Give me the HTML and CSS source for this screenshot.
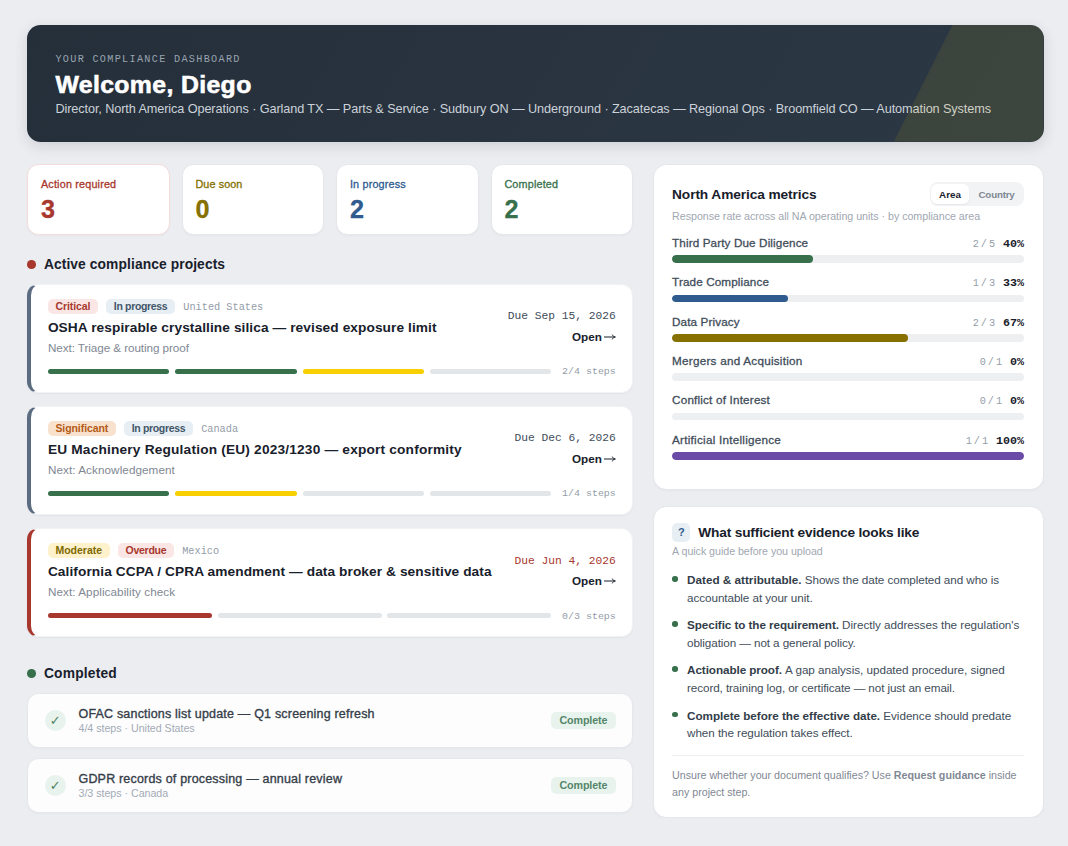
FILE: index.html
```html
<!DOCTYPE html>
<html lang="en">
<head>
<meta charset="utf-8">
<title>Compliance Dashboard</title>
<link rel="stylesheet" href="styles.css">
</head>
<body>
<div class="page">
  <header class="hero">
    <div class="eyebrow">YOUR COMPLIANCE DASHBOARD</div>
    <h1>Welcome, Diego</h1>
    <p>Director, North America Operations · Garland TX — Parts &amp; Service · Sudbury ON — Underground · Zacatecas — Regional Ops · Broomfield CO — Automation Systems</p>
  </header>
  <div class="columns">
    <main class="main">
      <div class="stats">
        <div class="stat alert red"><div class="label">Action required</div><div class="num">3</div></div>
        <div class="stat olive"><div class="label t-09">Due soon</div><div class="num">0</div></div>
        <div class="stat blue"><div class="label">In progress</div><div class="num">2</div></div>
        <div class="stat green"><div class="label">Completed</div><div class="num">2</div></div>
      </div>
      <h2 class="section"><span class="dot bg-red"></span>Active compliance projects</h2>
      <div class="projects">
        <article class="project">
          <div class="top">
            <div class="info">
              <div class="tags"><span class="tag critical">Critical</span><span class="tag progress">In progress</span><span class="country">United States</span></div>
              <h3>OSHA respirable crystalline silica — revised exposure limit</h3>
              <div class="next tight">Next: Triage &amp; routing proof</div>
            </div>
            <div class="side"><div class="due">Due Sep 15, 2026</div><div class="open">Open<svg viewBox="0 0 12 8" class="arrow"><path d="M0 4H11M8.2 1.6C8.8 2.9 9.7 3.7 11.4 4C9.7 4.3 8.8 5.1 8.2 6.4"/></svg></div></div>
          </div>
          <div class="steps"><div class="bars"><i class="bg-green"></i><i class="bg-green"></i><i class="bg-yellow"></i><i></i></div><span>2/4 steps</span></div>
        </article>
        <article class="project">
          <div class="top">
            <div class="info">
              <div class="tags"><span class="tag significant">Significant</span><span class="tag progress">In progress</span><span class="country">Canada</span></div>
              <h3 class="wide">EU Machinery Regulation (EU) 2023/1230 — export conformity</h3>
              <div class="next">Next: Acknowledgement</div>
            </div>
            <div class="side"><div class="due">Due Dec 6, 2026</div><div class="open">Open<svg viewBox="0 0 12 8" class="arrow"><path d="M0 4H11M8.2 1.6C8.8 2.9 9.7 3.7 11.4 4C9.7 4.3 8.8 5.1 8.2 6.4"/></svg></div></div>
          </div>
          <div class="steps"><div class="bars"><i class="bg-green"></i><i class="bg-yellow"></i><i></i><i></i></div><span>1/4 steps</span></div>
        </article>
        <article class="project late">
          <div class="top">
            <div class="info">
              <div class="tags"><span class="tag moderate">Moderate</span><span class="tag overdue">Overdue</span><span class="country">Mexico</span></div>
              <h3>California CCPA / CPRA amendment — data broker &amp; sensitive data</h3>
              <div class="next">Next: Applicability check</div>
            </div>
            <div class="side"><div class="due red">Due Jun 4, 2026</div><div class="open">Open<svg viewBox="0 0 12 8" class="arrow"><path d="M0 4H11M8.2 1.6C8.8 2.9 9.7 3.7 11.4 4C9.7 4.3 8.8 5.1 8.2 6.4"/></svg></div></div>
          </div>
          <div class="steps"><div class="bars"><i class="bg-red"></i><i></i><i></i></div><span>0/3 steps</span></div>
        </article>
      </div>
      <h2 class="section done-title"><span class="dot bg-green"></span>Completed</h2>
      <div class="done-list">
        <div class="done"><span class="check">✓</span><div class="done-text"><b>OFAC sanctions list update — Q1 screening refresh</b><small>4/4 steps · United States</small></div><span class="complete">Complete</span></div>
        <div class="done"><span class="check">✓</span><div class="done-text"><b>GDPR records of processing — annual review</b><small>3/3 steps · Canada</small></div><span class="complete">Complete</span></div>
      </div>
    </main>
    <aside class="aside">
      <section class="card metrics">
        <div class="metrics-head"><h2>North America metrics</h2><div class="toggle"><span class="on">Area</span><span>Country</span></div></div>
        <p class="sub resp">Response rate across all NA operating units · by compliance area</p>
        <div class="metric"><div class="row"><span class="name">Third Party Due Diligence</span><span class="frac">2<i>/</i>5</span><b>40%</b></div><div class="track"><div class="bg-green" style="width:40%"></div></div></div>
        <div class="metric"><div class="row"><span class="name">Trade Compliance</span><span class="frac">1<i>/</i>3</span><b>33%</b></div><div class="track"><div class="bg-blue" style="width:33%"></div></div></div>
        <div class="metric"><div class="row"><span class="name">Data Privacy</span><span class="frac">2<i>/</i>3</span><b>67%</b></div><div class="track"><div class="bg-olive" style="width:67%"></div></div></div>
        <div class="metric"><div class="row"><span class="name t-25">Mergers and Acquisition</span><span class="frac">0<i>/</i>1</span><b>0%</b></div><div class="track"></div></div>
        <div class="metric"><div class="row"><span class="name t-19">Conflict of Interest</span><span class="frac">0<i>/</i>1</span><b>0%</b></div><div class="track"></div></div>
        <div class="metric"><div class="row"><span class="name t-25">Artificial Intelligence</span><span class="frac">1<i>/</i>1</span><b>100%</b></div><div class="track"><div class="bg-purple" style="width:100%"></div></div></div>
      </section>
      <section class="card guide">
        <div class="guide-head"><span class="q">?</span><h2>What sufficient evidence looks like</h2></div>
        <p class="sub">A quick guide before you upload</p>
        <ul>
          <li><b class="b1">Dated &amp; attributable.</b> Shows the date completed and who is<br>accountable at your unit.</li>
          <li><b>Specific to the requirement.</b> <span class="even">Directly addresses the regulation's</span><br><span class="snug">obligation — not a general policy.</span></li>
          <li><b>Actionable proof.</b> <span class="even">A gap analysis, updated procedure, signed</span><br><span class="snug">record, training log, or certificate — not just an email.</span></li>
          <li><b class="b4">Complete before the effective date.</b> <span class="even">Evidence should predate</span><br>when the regulation takes effect.</li>
        </ul>
        <p class="foot">Unsure whether your document qualifies? Use <b>Request guidance</b> inside<br>any project step.</p>
      </section>
    </aside>
  </div>
</div>
</body>
</html>
```
FILE: styles.css
```css
* { box-sizing: border-box; margin: 0; padding: 0; }
body {
  background: #ecedf1;
  color: #18202b;
  font-family: "Liberation Sans", Arial, sans-serif;
  white-space: nowrap;
}
.page { padding: 24.5px 24.5px 0 27.4px; }

.red { color: #a8382e; }
.olive { color: #857000; }
.blue { color: #2f5b8f; }
.green { color: #38704c; }
.bg-red { background: #a8382e !important; }
.bg-green { background: #38704c !important; }
.bg-yellow { background: #f8cf00 !important; }
.bg-blue { background: #2f5b8f; }
.bg-olive { background: #857000; }
.bg-purple { background: #6b4aa8; }

/* Hero banner */
.hero {
  position: relative;
  height: 117px;
  padding: 28px 28px 0;
  border-radius: 13.5px;
  background: linear-gradient(120deg, #252f3a, #2c3845);
  box-shadow: 0 4px 14px rgba(30, 41, 59, .14);
}
.hero::after {
  content: "";
  position: absolute;
  top: 0; right: 0; bottom: 0;
  width: 149.5px;
  border-radius: 0 13.5px 13.5px 0;
  background: rgba(248, 207, 0, .085);
  clip-path: polygon(39.3% 0, 100% 0, 100% 100%, 0 100%);
}
.eyebrow {
  font: 10.2px/14px "Liberation Mono", monospace;
  letter-spacing: 1.3px;
  color: #98a4b0;
}
.hero h1 {
  margin-top: 4px;
  font-size: 24.8px;
  line-height: 28px;
  letter-spacing: .37px;
  color: #fff;
  -webkit-text-stroke: .6px #fff;
}
.hero p {
  margin-top: 1.4px;
  font-size: 12.7px;
  line-height: 18px;
  letter-spacing: -.099px;
  color: #ccd2d9;
}

.columns { display: flex; gap: 19.6px; margin-top: 22.9px; }
.main { width: 605.7px; }
.aside { flex: 1; }

/* Stat tiles */
.stats { display: grid; grid-template-columns: repeat(4, 1fr); gap: 12.2px; }
.stat, .card, .done { background: #fff; border: 1px solid #e5e7eb; box-shadow: 0 1px 2px rgba(30, 41, 59, .03); }
.stat { height: 71.1px; padding: 12px 12.6px; border-radius: 11.5px; }
.stat.alert { border-color: #f3dcd9; }
.label { font-size: 10.8px; line-height: 14px; letter-spacing: .18px; -webkit-text-stroke: .3px; }
.t-09 { letter-spacing: .096px; }
.num { margin-top: 5px; font-size: 25.2px; line-height: 26px; font-weight: 700; -webkit-text-stroke: .3px; }

.section {
  display: flex;
  align-items: center;
  gap: 7.8px;
  margin: 20.6px 0 9.6px;
  font-size: 13.8px;
  line-height: 18px;
  letter-spacing: .1px;
}
.dot { width: 8.7px; height: 8.7px; margin-top: -1.4px; border-radius: 50%; }
.done-title { margin: 27.8px 0 9.4px; letter-spacing: .2px; }

/* Active projects */
.projects { display: grid; gap: 12.8px; }
.project {
  height: 109.4px;
  padding: 14px 16.3px 0 16.5px;
  background: #fff;
  border: 1px solid #f1f2f4;
  border-left: 4px solid #5b6b80;
  border-radius: 11.5px;
  box-shadow: 0 1px 2px rgba(30, 41, 59, .05);
}
.project.late { border-left-color: #a8382e; }
.top { display: flex; justify-content: space-between; }
.tags { display: flex; gap: 8.4px; height: 15px; }
.tag {
  padding: 0 7.5px;
  border-radius: 5px;
  font-size: 10.5px;
  line-height: 15px;
  font-weight: 700;
  letter-spacing: -.07px;
}
.critical { background: #fae6e4; color: #a8382e; }
.overdue { background: #fae6e4; color: #a8382e; letter-spacing: -.25px; }
.progress { background: #e8eff4; color: #43566a; letter-spacing: -.33px; }
.significant { background: #f9e2cd; color: #b35a16; }
.moderate { background: #fdf2cc; color: #7d6900; letter-spacing: 0; }
.country { font: 10.25px/16.6px "Liberation Mono", monospace; color: #939ca8; }
.project h3 { margin-top: 5.2px; font-size: 13.7px; line-height: 18px; letter-spacing: .086px; }
.project .wide { letter-spacing: .187px; }
.next { margin-top: 3.9px; font-size: 11.7px; line-height: 14px; letter-spacing: .078px; color: #7f8893; }
.next.tight { letter-spacing: -.069px; }
.side { padding-top: 10.6px; text-align: right; }
.due { font: 11.25px/14px "Liberation Mono", monospace; color: #414d5a; }
.due.red { color: #a8382e; }
.open { margin-top: 6.6px; font-size: 11.7px; line-height: 14px; font-weight: 700; }
.arrow { width: 12px; height: 8px; margin-left: 2px; fill: none; stroke: #18202b; stroke-width: 1; }
.steps { display: flex; align-items: center; gap: 10.8px; margin-top: 9.7px; height: 14px; }
.bars { flex: 1; display: flex; gap: 5.8px; }
.bars i { flex: 1; height: 5px; border-radius: 2.5px; background: #e3e6e9; }
.steps span { padding-top: 1.4px; font: 9.95px/14px "Liberation Mono", monospace; color: #939ca8; }

/* Completed projects */
.done-list { display: grid; gap: 10px; }
.done {
  display: flex;
  align-items: center;
  height: 55.2px;
  padding: 0 16.4px;
  border-radius: 11.5px;
  background: #fdfdfe;
}
.check {
  width: 21px;
  height: 21px;
  border-radius: 50%;
  background: #e9f3ed;
  color: #4c8260;
  font: 700 13px/21px "DejaVu Sans", sans-serif;
  text-align: center;
}
.done-text { flex: 1; display: grid; margin-left: 12.7px; }
.done-text b {
  padding-top: 1px;
  font-size: 12.5px;
  line-height: 14px;
  font-weight: 400;
  letter-spacing: .19px;
  color: #363e49;
  -webkit-text-stroke: .35px;
}
.done-text small { font-size: 10.7px; line-height: 14px; letter-spacing: -.033px; color: #a3abb5; }
.complete {
  padding: 0 8.3px;
  border-radius: 5px;
  background: #e9f3ed;
  color: #53866a;
  font-size: 10.7px;
  line-height: 17px;
  font-weight: 700;
  letter-spacing: -.088px;
}

/* Right column cards */
.card { padding: 16.6px 18.4px 0; border-radius: 13.5px; }
.metrics { height: 325.5px; }
.metrics-head { display: flex; justify-content: space-between; align-items: center; }
.card h2 { font-size: 13.7px; line-height: 18px; letter-spacing: -.086px; }
.metrics-head h2 { padding-top: 1.4px; }
.toggle { display: flex; height: 24px; padding: 1.7px; border-radius: 8px; background: #f1f3f5; }
.toggle span {
  padding: 0 7.8px;
  border-radius: 6px;
  font-size: 9.8px;
  line-height: 21.4px;
  font-weight: 700;
  letter-spacing: -.2px;
  color: #7f8893;
}
.toggle span:last-child { margin-left: 2px; }
.toggle .on { background: #fff; color: #18202b; letter-spacing: 0; box-shadow: 0 1px 2px rgba(30, 41, 59, .06); }
.sub { font-size: 10.7px; line-height: 14px; letter-spacing: -.046px; color: #9fa7b1; }
.resp { margin: 2.7px 0 12.2px; letter-spacing: -.033px; }
.metric { height: 39.35px; }
.row { display: flex; height: 16px; line-height: 15px; }
.name { flex: 1; font-size: 11.7px; letter-spacing: .12px; color: #414d5a; -webkit-text-stroke: .3px; }
.t-25 { letter-spacing: .25px; }
.t-19 { letter-spacing: .19px; }
.frac { font: 10.2px/19px "Liberation Mono", monospace; color: #939ca8; }
.frac i { margin: 0 2px; font-style: normal; }
.row b { margin-left: 8px; font: 700 11.7px/18.4px "Liberation Mono", monospace; }
.track { height: 7.6px; margin-top: 4.4px; border-radius: 4px; background: #eeeff1; overflow: hidden; }
.track div { height: 100%; border-radius: 4px; }

.guide { height: 311.8px; margin-top: 16px; }
.guide-head { display: flex; align-items: center; gap: 7.8px; height: 18.4px; }
.guide-head h2 { letter-spacing: -.162px; }
.q {
  width: 18.4px;
  height: 18.4px;
  border-radius: 5px;
  background: #e8eff4;
  color: #2f5b8f;
  font-size: 11px;
  line-height: 18.4px;
  font-weight: 700;
  text-align: center;
}
.guide .sub { margin-top: 2.4px; }
.guide ul { display: grid; gap: 9.7px; margin-top: 13px; list-style: none; }
.guide li {
  position: relative;
  padding-left: 15px;
  font-size: 11.7px;
  line-height: 17.7px;
  letter-spacing: -.074px;
  color: #414d5a;
}
.guide li::before {
  content: "";
  position: absolute;
  left: 0;
  top: 5px;
  width: 5.6px;
  height: 5.6px;
  border-radius: 50%;
  background: #38704c;
}
.guide li b { color: #333d49; }
.guide .b1 { letter-spacing: .01px; }
.guide .b4 { letter-spacing: -.034px; }
.even { letter-spacing: -.03px; }
.snug { letter-spacing: -.098px; }
.foot {
  margin-top: 13px;
  padding-top: 10.7px;
  border-top: 1px solid #eeeff2;
  font-size: 10.7px;
  line-height: 17px;
  letter-spacing: -.01px;
  color: #7f8893;
}
```
